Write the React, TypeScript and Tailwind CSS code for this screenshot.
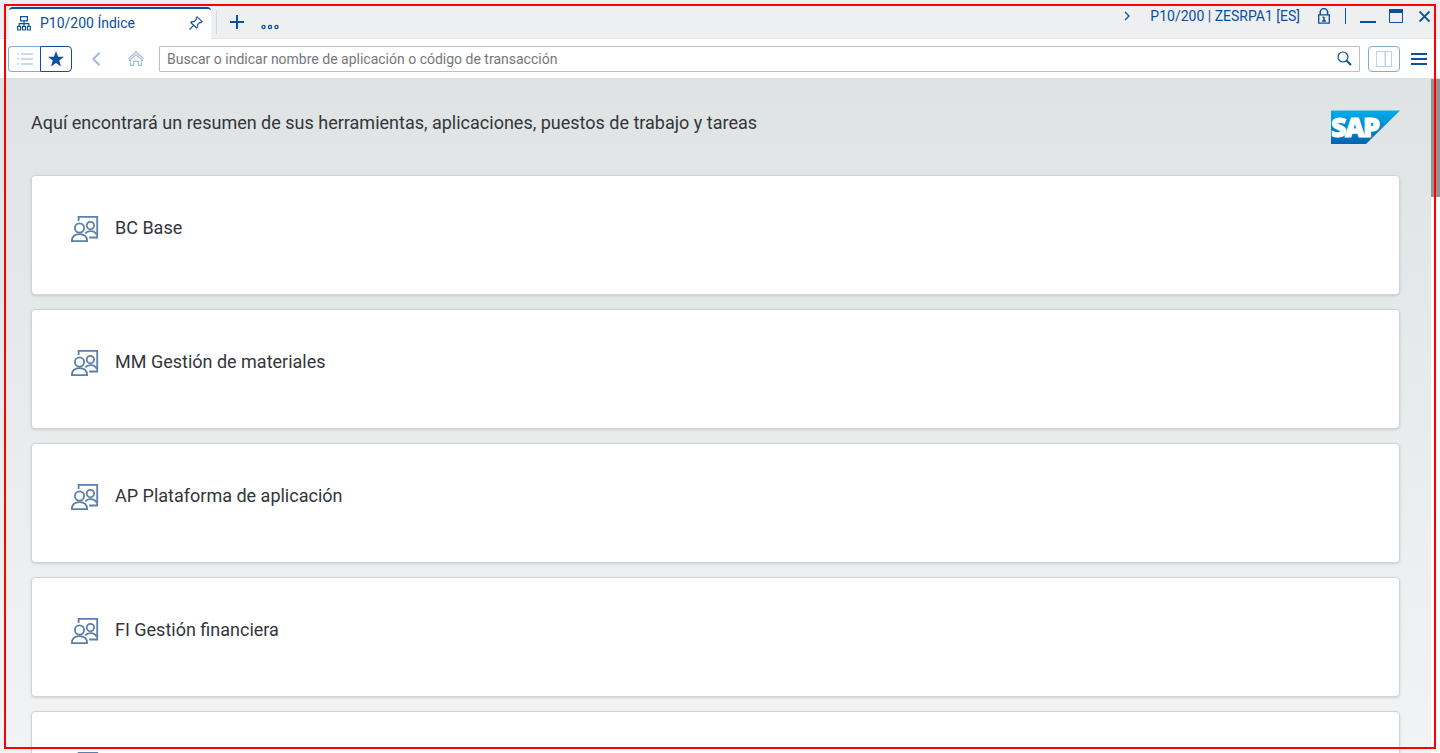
import type { ReactNode } from "react";

const areas = [
  "BC Base",
  "MM Gestión de materiales",
  "AP Plataforma de aplicación",
  "FI Gestión financiera",
  "",
];

function HierarchyIcon() {
  return (
    <svg width="14" height="15" viewBox="0 0 14 15" fill="none" stroke="#0a509c" strokeWidth="1.2" aria-hidden="true">
      <path d="M3.6 .6h6.8v4.3H3.6zM7 5v5M2.2 10V7.6h9.6V10" />
      <rect x=".6" y="10.4" width="3" height="3.6" rx=".6" />
      <rect x="5.5" y="10.4" width="3" height="3.6" rx=".6" />
      <rect x="10.4" y="10.4" width="3" height="3.6" rx=".6" />
    </svg>
  );
}

function PinIcon() {
  return (
    <svg width="14" height="14" viewBox="0 0 14 14" fill="none" stroke="#0a509c" strokeWidth="1.1" strokeLinejoin="round" aria-hidden="true">
      <path d="M8.2 .8l5 4.8-1.2 1-1.2-.2-2.2 2.3.1 2.2-1 1.1L1.8 6.5l1-1 2.4.1L7.4 3.2 7.1 2z" />
      <path d="M4.7 9.3L.5 13.5" />
    </svg>
  );
}

function LockIcon() {
  return (
    <svg width="14" height="17" viewBox="0 0 14 17" fill="none" stroke="#0a509c" strokeWidth="1.5" aria-hidden="true">
      <path d="M3.2 7V4.3a3.6 3.6 0 0 1 7.4 0V7" />
      <path d="M1.7 6.8h10.6v8.4H1.7z" strokeWidth="1.3" />
      <path d="M7 9v4M5.5 9.3H7M5 13.1h4" />
    </svg>
  );
}

function HomeIcon() {
  return (
    <svg width="16" height="15" viewBox="0 0 16 15" fill="none" stroke="#a5bedb" strokeWidth="1.2" aria-hidden="true">
      <path d="M.5 7.8L8 .9l7.5 6.9" />
      <path d="M.9 9.9L8 3.6l7.1 6.3" />
      <path d="M2.5 8.6v5.7h3.2v-4h4.6v4h3.2V8.6" />
    </svg>
  );
}

function GroupIcon() {
  return (
    <svg width="28" height="27" viewBox="0 0 28 27" fill="none" stroke="#5b7fa8" strokeWidth="1.8" aria-hidden="true">
      <path d="M7.6 6V1.9h18.6v20.6h-8" />
      <circle cx="8.5" cy="13" r="4.6" />
      <circle cx="19.4" cy="10.6" r="3.7" />
      <path d="M.9 26.1c0-4.6 2.6-7 7.6-7s7.6 2.4 7.6 7z" />
      <path d="M14.3 18.4c1.3-1.6 3-2.2 5.1-2.2 3 0 5.3 1.2 6.2 3.6" />
    </svg>
  );
}

function SapLogo() {
  return (
    <svg width="69" height="34" viewBox="0 0 69 34" role="img" aria-label="SAP" className="shrink-0 overflow-visible">
      <defs>
        <linearGradient id="sap-blue" x1="0" y1="0" x2="0" y2="1">
          <stop offset="0" stopColor="#00aeea" />
          <stop offset="1" stopColor="#0463b1" />
        </linearGradient>
      </defs>
      <path d="M0 .5h69L35 34H0z" fill="url(#sap-blue)" />
      <text
        x="0 14 32"
        y="27"
        fill="#fff"
        stroke="#fff"
        strokeWidth="1"
        className="font-['Open_Sans',sans-serif] text-[27px] font-extrabold"
      >
        SAP
      </text>
    </svg>
  );
}

function IconButton({ label, className = "", children }: { label: string; className?: string; children: ReactNode }) {
  return (
    <button type="button" aria-label={label} className={`flex shrink-0 items-center justify-center ${className}`}>
      {children}
    </button>
  );
}

function TitleBar() {
  return (
    <header className="flex h-[39px] shrink-0 border-b border-[#e4e6e8] bg-[#edeff0] pl-[9px] text-sm text-[#0a509c]">
      <div className="mt-[7px] -mb-px flex w-[202px] items-center rounded-t-sm border-t-2 border-[#0a509c] bg-white px-2 pb-[2px]">
        <HierarchyIcon />
        <span className="ml-[9px] flex-1">P10/200 Índice</span>
        <IconButton label="Fijar">
          <PinIcon />
        </IconButton>
      </div>
      <div className="mt-[11px] ml-[5px] h-[23px] w-px bg-[#d5d8db]" />
      <IconButton label="Nueva ficha" className="mt-[6px] ml-[13px] h-8">
        <svg width="14" height="14" viewBox="0 0 14 14" stroke="#0a509c" strokeWidth="2" aria-hidden="true">
          <path d="M7 0v14M0 7h14" />
        </svg>
      </IconButton>
      <IconButton label="Más" className="mt-[11px] ml-[17px] h-8">
        <svg width="18" height="6" viewBox="0 0 18 6" fill="none" stroke="#0a509c" strokeWidth="1.3" aria-hidden="true">
          <circle cx="2.5" cy="3" r="1.6" />
          <circle cx="9" cy="3" r="1.6" />
          <circle cx="15.5" cy="3" r="1.6" />
        </svg>
      </IconButton>
      <div className="flex h-8 flex-1 items-center justify-end pr-[10px]">
        <IconButton label="Mostrar más">
          <svg width="6" height="10" viewBox="0 0 6 10" fill="none" stroke="#0a509c" strokeWidth="1.3" aria-hidden="true">
            <path d="M1 1l4 4-4 4" />
          </svg>
        </IconButton>
        <span className="ml-5">P10/200 | ZESRPA1 [ES]</span>
        <span className="ml-[17px]">
          <LockIcon />
        </span>
        <span className="ml-[14px] h-4 w-px bg-[#0a509c]" />
        <IconButton label="Minimizar" className="ml-[14px]">
          <svg width="16" height="14" viewBox="0 0 16 14" aria-hidden="true">
            <path d="M0 12h16v2H0z" fill="#0a509c" />
          </svg>
        </IconButton>
        <IconButton label="Maximizar" className="ml-[13px]">
          <svg width="14" height="14" viewBox="0 0 14 14" fill="none" stroke="#0a509c" aria-hidden="true">
            <path d="M.5.5h13v13H.5z" />
            <path d="M0 2h14" strokeWidth="4" />
          </svg>
        </IconButton>
        <IconButton label="Cerrar" className="ml-4">
          <svg width="11" height="11" viewBox="0 0 11 11" stroke="#0a509c" strokeWidth="1.9" aria-hidden="true">
            <path d="M.5.5l10 10M10.5.5l-10 10" />
          </svg>
        </IconButton>
      </div>
    </header>
  );
}

function Toolbar() {
  return (
    <div className="flex h-10 shrink-0 items-center border-b border-[#dcdfe1] bg-white pr-[13px] pl-2">
      <IconButton label="Lista" className="h-[26px] w-8 rounded-l border border-r-0 border-[#84abd6]">
        <svg width="16" height="12" viewBox="0 0 16 12" stroke="#bcd0e6" strokeWidth="1.6" aria-hidden="true">
          <path d="M0 1h2M4 1h12M0 6h2M4 6h12M0 11h2M4 11h12" />
        </svg>
      </IconButton>
      <IconButton label="Favoritos" className="h-[26px] w-8 rounded-r border border-[#0a509c]">
        <svg width="16" height="16" viewBox="0 0 16 16" fill="#0a509c" aria-hidden="true">
          <path d="M8 0l2.1 5.7H16l-4.8 3.7L13 15.5 8 12l-5 3.5 1.8-6.1L0 5.7h5.9z" />
        </svg>
      </IconButton>
      <IconButton label="Atrás" className="ml-5">
        <svg width="8" height="14" viewBox="0 0 8 14" fill="none" stroke="#9dbbdd" strokeWidth="2" aria-hidden="true">
          <path d="M7.5.8L1.3 7l6.2 6.2" />
        </svg>
      </IconButton>
      <IconButton label="Inicio" className="ml-7">
        <HomeIcon />
      </IconButton>
      <form role="search" className="ml-[15px] flex h-[26px] min-w-0 flex-1 items-center rounded-[1px] border border-[#bfbfbf] pr-[7px] pl-[7px]">
        <input
          type="text"
          aria-label="Buscar"
          placeholder="Buscar o indicar nombre de aplicación o código de transacción"
          className="min-w-0 flex-1 bg-transparent text-sm text-[#333] outline-none placeholder:text-[#74777a]"
        />
        <IconButton label="Iniciar búsqueda">
          <svg width="15" height="15" viewBox="0 0 15 15" fill="none" stroke="#0a509c" aria-hidden="true">
            <circle cx="6" cy="6" r="5" strokeWidth="1.2" />
            <path d="M9.7 9.7l4.3 4.3" strokeWidth="2" />
          </svg>
        </IconButton>
      </form>
      <IconButton label="Dividir vista" className="ml-2 h-[26px] w-8 rounded border border-[#84abd6]">
        <svg width="16" height="16" viewBox="0 0 16 16" fill="none" stroke="#bcd0e6" aria-hidden="true">
          <path d="M.5.5h15v15H.5zM9.5.5v15" />
          <path d="M8.5 1v14" stroke="#f0e3e6" />
        </svg>
      </IconButton>
      <IconButton label="Menú" className="ml-[11px]">
        <svg width="16" height="12" viewBox="0 0 16 12" stroke="#0a509c" strokeWidth="2" aria-hidden="true">
          <path d="M0 1h16M0 6h16M0 11h16" />
        </svg>
      </IconButton>
    </div>
  );
}

export default function App() {
  return (
    <div className="relative flex h-screen flex-col overflow-hidden font-[Roboto,'Liberation_Sans',sans-serif]">
      <TitleBar />
      <Toolbar />
      <div className="flex min-h-0 flex-1">
        <main className="min-w-0 flex-1 overflow-hidden bg-linear-to-b from-[#dfe3e4] to-[#f2f3f5] px-[31px]">
          <div className="flex h-24 items-center justify-between">
            <h1 className="mb-2 text-lg text-[#32363a]">
              Aquí encontrará un resumen de sus herramientas, aplicaciones, puestos de trabajo y tareas
            </h1>
            <SapLogo />
          </div>
          <ul className="flex flex-col gap-[14px]">
            {areas.map((name, index) => (
              <li key={index}>
                <a
                  href="#"
                  aria-label={name || "Área"}
                  className="flex h-[120px] items-start rounded border border-[#d0d4d6] bg-white px-[39px] pt-[39px] text-lg text-[#32363a] shadow-sm"
                >
                  <GroupIcon />
                  <span className="ml-4 leading-[26px]">{name}</span>
                </a>
              </li>
            ))}
          </ul>
        </main>
        <div className="w-[9px] shrink-0 bg-white">
          <div className="h-[118px] bg-[#949494]" />
        </div>
      </div>
      <div className="pointer-events-none absolute inset-1 border-2 border-[#ff0000]" />
    </div>
  );
}
